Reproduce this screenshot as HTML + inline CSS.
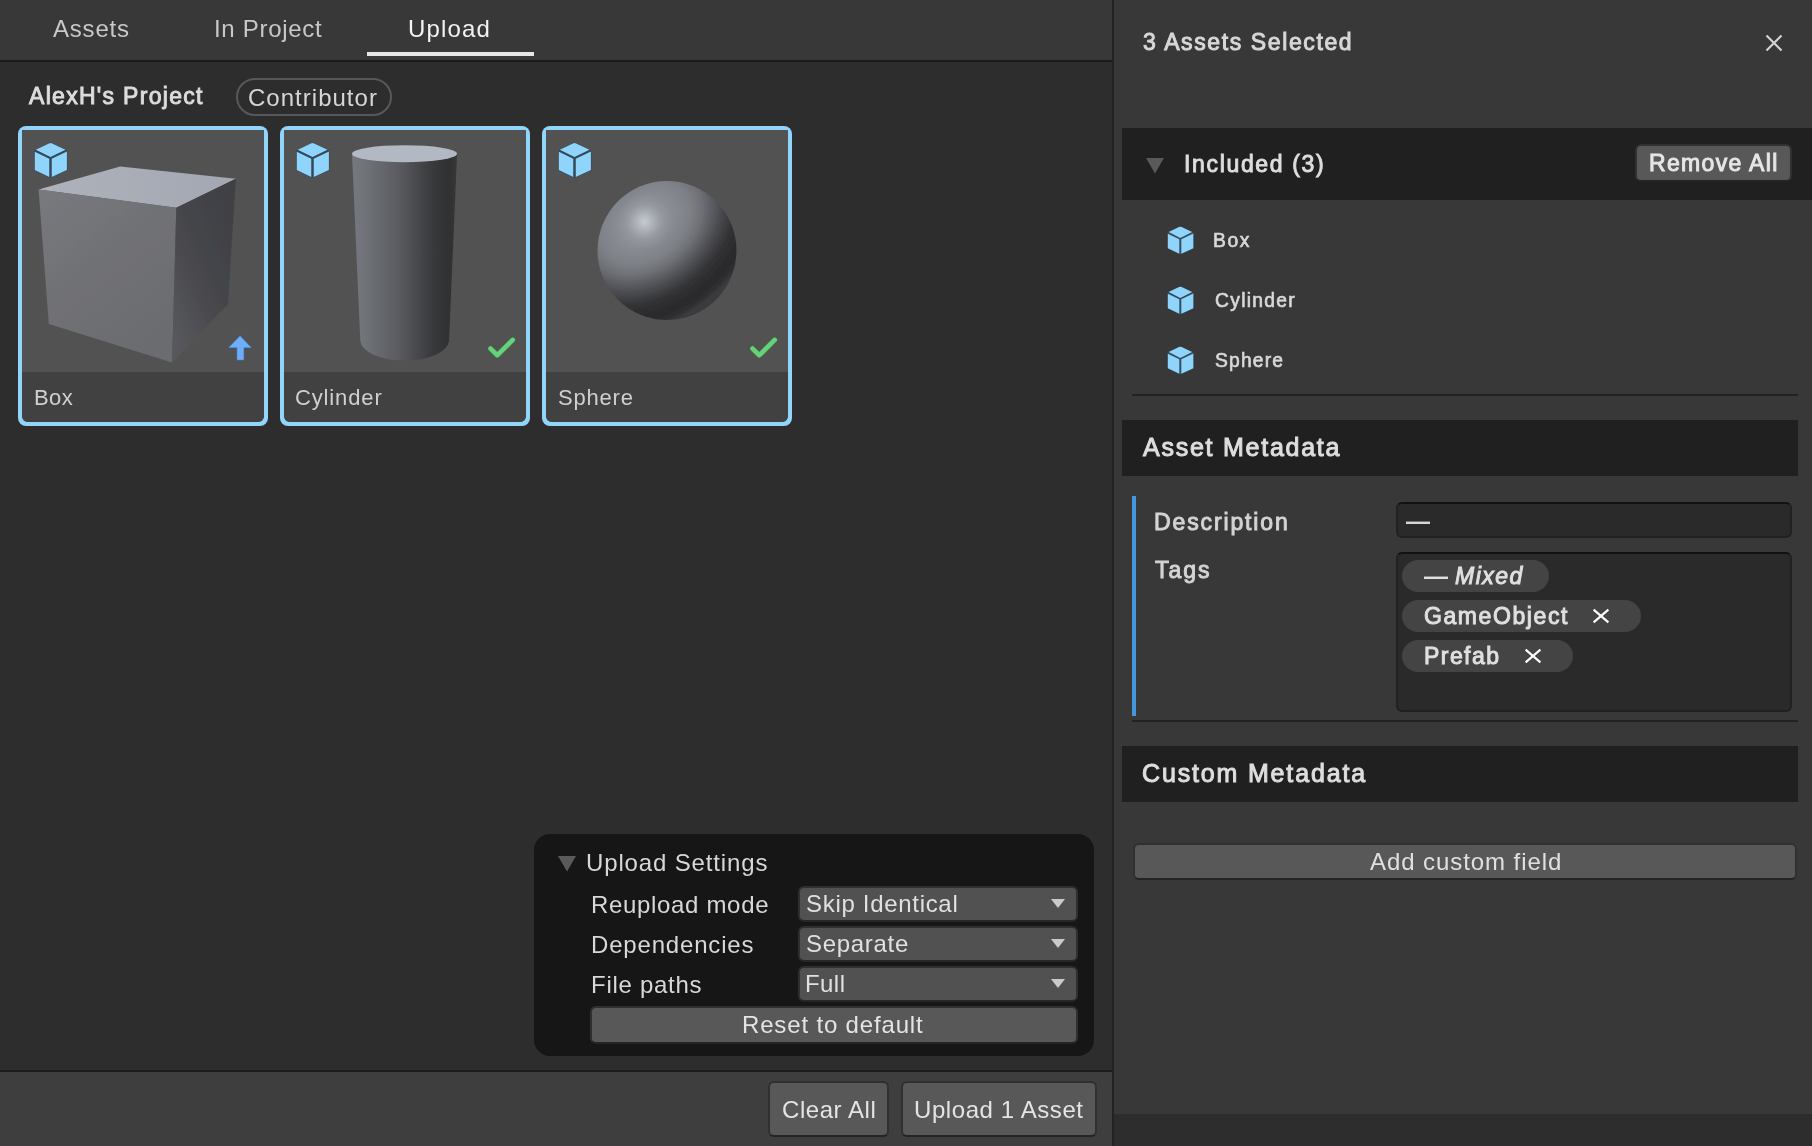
<!DOCTYPE html>
<html lang="en">
<head>
<meta charset="utf-8">
<title>Asset Manager - Upload</title>
<style>
html,body{margin:0;padding:0;}
body{width:1812px;height:1146px;overflow:hidden;background:#383838;position:relative;
 font-family:"Liberation Sans",sans-serif;font-size:24px;color:#d2d2d2;}
.abs{position:absolute;}
.t{position:absolute;white-space:nowrap;line-height:28px;height:28px;will-change:transform;}
.b{font-weight:bold;}
#left{position:absolute;left:0;top:0;width:1112px;height:1146px;background:#2d2d2d;overflow:hidden;}
#tabs{position:absolute;left:0;top:0;width:1112px;height:60px;background:#383838;border-bottom:2px solid #1b1b1b;}
#underline{position:absolute;left:367px;top:52px;width:167px;height:4px;background:#e6e6e6;}
#pill{position:absolute;left:236px;top:78px;width:152px;height:34px;border:2px solid #585858;border-radius:19px;}
.card{position:absolute;top:126px;width:250px;height:300px;border-radius:8px;background:#92d5fa;}
.card .in{position:absolute;left:4px;top:4px;width:242px;height:292px;background:#525252;overflow:hidden;border-radius:0 0 6px 6px;}
.card .lbl{position:absolute;left:0;top:242px;width:242px;height:50px;background:#414141;}
.card svg{position:absolute;left:0;top:0;}
#settings{position:absolute;left:534px;top:834px;width:560px;height:222px;border-radius:16px;background:#161616;}
.dd{position:absolute;left:798px;width:276px;height:32px;border:2px solid #2f2f2f;border-bottom-color:#262626;border-radius:6px;background:#515151;}
.dd i{position:absolute;right:11px;top:11px;width:0;height:0;border-left:7px solid transparent;border-right:7px solid transparent;border-top:9px solid #cacaca;}
.btn{position:absolute;border:2px solid #303030;border-bottom-color:#242424;border-radius:6px;background:#585858;}
#footer{position:absolute;left:0;top:1070px;width:1112px;height:76px;background:#3e3e3e;border-top:2px solid #1c1c1c;}
#divider{position:absolute;left:1112px;top:0;width:2px;height:1146px;background:#222;}
#right{position:absolute;left:1114px;top:0;width:698px;height:1146px;background:#383838;}
.hdr{position:absolute;background:#202020;}
.line{position:absolute;height:2px;background:#222;}
.inp{position:absolute;border:2px solid #212121;border-top-color:#111;border-radius:6px;background:#2a2a2a;}
.chip{position:absolute;height:32px;border-radius:16px;background:#444;}
</style>
</head>
<body>
<svg width="0" height="0" style="position:absolute"><defs><filter id="isoft" x="-10%" y="-10%" width="120%" height="120%"><feGaussianBlur stdDeviation="0.35"/></filter></defs></svg>
<div id="left">
  <div id="tabs"></div>
  <div class="t" style="left:53px;top:15px;color:#c8c8c8;letter-spacing:0.8px;">Assets</div>
  <div class="t" style="left:214px;top:15px;color:#c8c8c8;letter-spacing:0.7px;">In Project</div>
  <div class="t" style="left:408px;top:15px;color:#f2f2f2;letter-spacing:1.14px;">Upload</div>
  <div id="underline"></div>
  <div class="t" style="left:29px;top:82px;color:#dcdcdc;font-size:23px;letter-spacing:1.3px;-webkit-text-stroke:0.95px #dcdcdc;">AlexH's Project</div>
  <div id="pill"></div>
  <div class="t" style="left:248px;top:84px;color:#d6d6d6;letter-spacing:1.02px;">Contributor</div>

  <div class="card" style="left:18px;"><div class="in">
    <svg width="242" height="242" viewBox="4 4 242 242">
      <defs>
        <filter id="soft" x="-5%" y="-5%" width="110%" height="110%"><feGaussianBlur stdDeviation="0.55"/></filter>
        <linearGradient id="bt" x1="0" y1="0" x2="1" y2="0"><stop offset="0" stop-color="#adb2bb"/><stop offset="1" stop-color="#a2a7b1"/></linearGradient>
        <linearGradient id="bf" x1="0" y1="0" x2="0.6" y2="1"><stop offset="0" stop-color="#787a7e"/><stop offset="0.5" stop-color="#707175"/><stop offset="1" stop-color="#6b6c6f"/></linearGradient>
        <linearGradient id="br" x1="1" y1="0" x2="0.2" y2="1"><stop offset="0" stop-color="#3e3f43"/><stop offset="0.5" stop-color="#444549"/><stop offset="1" stop-color="#57585c"/></linearGradient>
      </defs>
      <g filter="url(#soft)">
      <path d="M20.6 63.6 L102.2 40.6 L217.8 52.7 L158.3 81.8 Z" fill="url(#bt)"/>
      <path d="M20.6 63.6 L158.3 81.8 L154.1 236.4 L30.8 198 Z" fill="url(#bf)"/>
      <path d="M158.3 81.8 L217.8 52.7 L210 178 L154.1 236.4 Z" fill="url(#br)"/>
      </g>
    </svg>
    <div class="lbl"></div>
  </div></div>
  <div class="card" style="left:280px;"><div class="in">
    <svg width="242" height="242" viewBox="4 4 242 242">
      <defs>
        <linearGradient id="cy" x1="0" y1="0" x2="1" y2="0"><stop offset="0" stop-color="#75787e"/><stop offset="0.12" stop-color="#707379"/><stop offset="0.45" stop-color="#5a5b5f"/><stop offset="0.75" stop-color="#3a3b3e"/><stop offset="0.93" stop-color="#2f3032"/><stop offset="1" stop-color="#38393b"/></linearGradient>
      </defs>
      <g filter="url(#soft)"><path d="M72 27.7 L80.3 214.9 A44.4 20.7 0 0 0 169 214.9 L177.1 27.7 Z" fill="url(#cy)"/>
      <ellipse cx="124.5" cy="27.7" rx="52.5" ry="8.5" fill="#b3b9c3"/></g>
    </svg>
    <div class="lbl"></div>
  </div></div>
  <div class="card" style="left:542px;"><div class="in">
    <svg width="242" height="242" viewBox="4 4 242 242">
      <defs>
        <radialGradient id="sp" cx="102.4" cy="95.8" r="100" gradientUnits="userSpaceOnUse" gradientTransform="translate(102.4 95.8) rotate(-37) scale(1.3 1) rotate(37) translate(-102.4 -95.8)"><stop offset="0" stop-color="#979ba2"/><stop offset="0.22" stop-color="#8a8d93"/><stop offset="0.38" stop-color="#7d8086"/><stop offset="0.48" stop-color="#6e7075"/><stop offset="0.55" stop-color="#5d5f64"/><stop offset="0.64" stop-color="#4a4b4f"/><stop offset="0.71" stop-color="#3b3c3f"/><stop offset="0.77" stop-color="#313134"/><stop offset="0.83" stop-color="#2d2d2f"/><stop offset="0.9" stop-color="#2b2b2d"/><stop offset="0.96" stop-color="#2e2e30"/><stop offset="1" stop-color="#3a3b3e"/></radialGradient>
        <radialGradient id="sh" cx="102.4" cy="95.8" r="28" gradientUnits="userSpaceOnUse"><stop offset="0" stop-color="#c9cdd4" stop-opacity="0.95"/><stop offset="0.3" stop-color="#c0c4cb" stop-opacity="0.6"/><stop offset="0.65" stop-color="#b0b4bb" stop-opacity="0.2"/><stop offset="1" stop-color="#a0a4ab" stop-opacity="0"/></radialGradient>
      </defs>
      <g filter="url(#soft)"><circle cx="125" cy="124.5" r="69.5" fill="url(#sp)"/><circle cx="125" cy="124.5" r="69.5" fill="url(#sh)"/></g>
    </svg>
    <div class="lbl"></div>
  </div></div>
  <svg class="abs" style="left:34px;top:141.9px;" width="34" height="36.4" viewBox="0 0 34 36.4"><g filter="url(#isoft)"><path d="M16.5 0.3 L33.4 8.4 V28.2 L16.5 36.2 L0.3 28.2 V8.4 Z" fill="#34485a"/><path d="M14.9 1.4 Q16.5 0.6 18.1 1.4 L31.5 7.65 L16.5 15.0 L1.8 7.65 Z M0.8 9.7 L15.25 16.75 V35.1 L0.8 27.9 Z M17.75 16.75 L32.9 9.5 V27.9 L17.75 35.1 Z" fill="#8fd4fb"/></g></svg>
  <svg class="abs" style="left:296px;top:141.9px;" width="34" height="36.4" viewBox="0 0 34 36.4"><g filter="url(#isoft)"><path d="M16.5 0.3 L33.4 8.4 V28.2 L16.5 36.2 L0.3 28.2 V8.4 Z" fill="#34485a"/><path d="M14.9 1.4 Q16.5 0.6 18.1 1.4 L31.5 7.65 L16.5 15.0 L1.8 7.65 Z M0.8 9.7 L15.25 16.75 V35.1 L0.8 27.9 Z M17.75 16.75 L32.9 9.5 V27.9 L17.75 35.1 Z" fill="#8fd4fb"/></g></svg>
  <svg class="abs" style="left:558px;top:141.9px;" width="34" height="36.4" viewBox="0 0 34 36.4"><g filter="url(#isoft)"><path d="M16.5 0.3 L33.4 8.4 V28.2 L16.5 36.2 L0.3 28.2 V8.4 Z" fill="#34485a"/><path d="M14.9 1.4 Q16.5 0.6 18.1 1.4 L31.5 7.65 L16.5 15.0 L1.8 7.65 Z M0.8 9.7 L15.25 16.75 V35.1 L0.8 27.9 Z M17.75 16.75 L32.9 9.5 V27.9 L17.75 35.1 Z" fill="#8fd4fb"/></g></svg>
  <svg class="abs" style="left:226px;top:334px;" width="28" height="28" viewBox="0 0 28 28"><path d="M14.07 1.5 L25.9 13.9 H18.1 V26.3 H10.75 V13.9 H2 Z" fill="#6eaef7" stroke="#3a5a8c" stroke-width="0.7" stroke-linejoin="round"/></svg>
  <svg class="abs" style="left:486px;top:334px;" width="30" height="26" viewBox="0 0 30 26"><path d="M4.55 14.6 L11.36 21.2 L26.7 5.9" stroke="#356f43" stroke-width="5.8" stroke-linecap="round" stroke-linejoin="round" fill="none" opacity="0.7"/><path d="M4.55 14.6 L11.36 21.2 L26.7 5.9" stroke="#66d07a" stroke-width="4.7" stroke-linecap="round" stroke-linejoin="round" fill="none"/></svg>
  <svg class="abs" style="left:748px;top:334px;" width="30" height="26" viewBox="0 0 30 26"><path d="M4.55 14.6 L11.36 21.2 L26.7 5.9" stroke="#356f43" stroke-width="5.8" stroke-linecap="round" stroke-linejoin="round" fill="none" opacity="0.7"/><path d="M4.55 14.6 L11.36 21.2 L26.7 5.9" stroke="#66d07a" stroke-width="4.7" stroke-linecap="round" stroke-linejoin="round" fill="none"/></svg>
  <div class="t" style="left:34px;top:384px;color:#d0d0d0;font-size:22px;letter-spacing:0.45px;">Box</div>
  <div class="t" style="left:295px;top:384px;color:#d0d0d0;font-size:22px;letter-spacing:0.86px;">Cylinder</div>
  <div class="t" style="left:558px;top:384px;color:#d0d0d0;font-size:22px;letter-spacing:0.8px;">Sphere</div>

  <div id="settings"></div>
  <svg class="abs" style="left:558px;top:856px;" width="18" height="16" viewBox="0 0 18 16"><path d="M0 0 H18 L9 15.5 Z" fill="#5a5a5a"/></svg>
  <div class="t" style="left:586px;top:849px;color:#d8d8d8;letter-spacing:0.86px;">Upload Settings</div>
  <div class="t" style="left:591px;top:891px;color:#d8d8d8;letter-spacing:0.67px;">Reupload mode</div>
  <div class="t" style="left:591px;top:931px;color:#d8d8d8;letter-spacing:0.82px;">Dependencies</div>
  <div class="t" style="left:591px;top:971px;color:#d8d8d8;letter-spacing:0.72px;">File paths</div>
  <div class="dd" style="top:886px;"><i></i></div>
  <div class="dd" style="top:926px;"><i></i></div>
  <div class="dd" style="top:966px;"><i></i></div>
  <div class="t" style="left:806px;top:890px;color:#e0e0e0;letter-spacing:0.69px;">Skip Identical</div>
  <div class="t" style="left:806px;top:930px;color:#e0e0e0;letter-spacing:0.69px;">Separate</div>
  <div class="t" style="left:805px;top:970px;color:#e0e0e0;letter-spacing:0.43px;">Full</div>
  <div class="btn" style="left:590px;top:1006px;width:484px;height:34px;"></div>
  <div class="t" style="left:742px;top:1011px;color:#e4e4e4;letter-spacing:0.84px;">Reset to default</div>

  <div id="footer"></div>
  <div class="btn" style="left:768px;top:1081px;width:117px;height:52px;"></div>
  <div class="t" style="left:782px;top:1096px;color:#e4e4e4;letter-spacing:0.55px;">Clear All</div>
  <div class="btn" style="left:901px;top:1081px;width:192px;height:52px;"></div>
  <div class="t" style="left:914px;top:1096px;color:#e4e4e4;letter-spacing:0.58px;">Upload 1 Asset</div>
</div>
<div id="divider"></div>
<div id="right">
  <div class="t" style="left:29px;top:28px;color:#d8d8d8;font-size:23px;letter-spacing:1.61px;-webkit-text-stroke:0.95px #d8d8d8;">3 Assets Selected</div>
  <svg class="abs" style="left:651px;top:34px;" width="18" height="18" viewBox="0 0 18 18"><path d="M1.5 1.5 L16.5 16.5 M16.5 1.5 L1.5 16.5" stroke="#d2d2d2" stroke-width="2.2" fill="none"/></svg>

  <div class="hdr" style="left:8px;top:128px;width:690px;height:72px;"></div>
  <svg class="abs" style="left:32px;top:158px;" width="18" height="16" viewBox="0 0 18 16"><path d="M0 0 H18 L9 15.5 Z" fill="#595959"/></svg>
  <div class="t" style="left:70px;top:150px;color:#dedede;font-size:23px;letter-spacing:1.66px;-webkit-text-stroke:0.95px #dedede;">Included (3)</div>
  <div class="btn" style="left:521px;top:144px;width:153px;height:34px;"></div>
  <div class="t" style="left:535px;top:149px;color:#e6e6e6;font-size:23px;letter-spacing:1.33px;-webkit-text-stroke:0.95px #e6e6e6;">Remove All</div>

  <svg class="abs" style="left:52.7px;top:225.5px;" width="27.4" height="28.9" viewBox="0 0 34 36.4"><g filter="url(#isoft)"><path d="M16.5 0.3 L33.4 8.4 V28.2 L16.5 36.2 L0.3 28.2 V8.4 Z" fill="#34485a"/><path d="M14.9 1.4 Q16.5 0.6 18.1 1.4 L31.5 7.65 L16.5 15.0 L1.8 7.65 Z M0.8 9.7 L15.25 16.75 V35.1 L0.8 27.9 Z M17.75 16.75 L32.9 9.5 V27.9 L17.75 35.1 Z" fill="#8fd4fb"/></g></svg>
  <svg class="abs" style="left:52.7px;top:285.5px;" width="27.4" height="28.9" viewBox="0 0 34 36.4"><g filter="url(#isoft)"><path d="M16.5 0.3 L33.4 8.4 V28.2 L16.5 36.2 L0.3 28.2 V8.4 Z" fill="#34485a"/><path d="M14.9 1.4 Q16.5 0.6 18.1 1.4 L31.5 7.65 L16.5 15.0 L1.8 7.65 Z M0.8 9.7 L15.25 16.75 V35.1 L0.8 27.9 Z M17.75 16.75 L32.9 9.5 V27.9 L17.75 35.1 Z" fill="#8fd4fb"/></g></svg>
  <svg class="abs" style="left:52.7px;top:345.5px;" width="27.4" height="28.9" viewBox="0 0 34 36.4"><g filter="url(#isoft)"><path d="M16.5 0.3 L33.4 8.4 V28.2 L16.5 36.2 L0.3 28.2 V8.4 Z" fill="#34485a"/><path d="M14.9 1.4 Q16.5 0.6 18.1 1.4 L31.5 7.65 L16.5 15.0 L1.8 7.65 Z M0.8 9.7 L15.25 16.75 V35.1 L0.8 27.9 Z M17.75 16.75 L32.9 9.5 V27.9 L17.75 35.1 Z" fill="#8fd4fb"/></g></svg>
  <div class="t" style="left:99px;top:227px;color:#d8d8d8;font-size:19.3px;letter-spacing:1.6px;-webkit-text-stroke:0.65px #d8d8d8;">Box</div>
  <div class="t" style="left:101px;top:287px;color:#d8d8d8;font-size:19.3px;letter-spacing:1.29px;-webkit-text-stroke:0.65px #d8d8d8;">Cylinder</div>
  <div class="t" style="left:101px;top:347px;color:#d8d8d8;font-size:19.3px;letter-spacing:1.16px;-webkit-text-stroke:0.65px #d8d8d8;">Sphere</div>

  <div class="line" style="left:18px;top:394px;width:666px;"></div>

  <div class="hdr" style="left:8px;top:420px;width:676px;height:56px;"></div>
  <div class="t" style="left:29px;top:433px;color:#dedede;font-size:25px;letter-spacing:1.75px;-webkit-text-stroke:1.0px #dedede;">Asset Metadata</div>

  <div class="abs" style="left:18px;top:496px;width:4px;height:220px;background:#4696de;"></div>
  <div class="t" style="left:40px;top:508px;color:#d4d4d4;font-size:23px;letter-spacing:1.87px;-webkit-text-stroke:0.95px #d4d4d4;">Description</div>
  <div class="inp" style="left:282px;top:502px;width:392px;height:32px;"></div>
  <div class="t b" style="left:292px;top:507px;color:#d6d6d6;">&mdash;</div>
  <div class="t" style="left:41px;top:556px;color:#d4d4d4;font-size:23px;letter-spacing:1.97px;-webkit-text-stroke:0.95px #d4d4d4;">Tags</div>
  <div class="inp" style="left:282px;top:552px;width:392px;height:156px;"></div>
  <div class="chip" style="left:288px;top:560px;width:147px;"></div>
  <div class="chip" style="left:288px;top:600px;width:239px;"></div>
  <div class="chip" style="left:288px;top:640px;width:171px;"></div>
  <div class="t b" style="left:310px;top:562px;color:#e0e0e0;">&mdash;</div>
  <div class="t" style="left:341px;top:562px;color:#e0e0e0;font-size:23px;letter-spacing:1.5px;-webkit-text-stroke:0.95px #e0e0e0;"><i>Mixed</i></div>
  <div class="t" style="left:310px;top:602px;color:#e0e0e0;font-size:23px;letter-spacing:1.59px;-webkit-text-stroke:0.95px #e0e0e0;">GameObject</div>
  <div class="t" style="left:310px;top:642px;color:#e0e0e0;font-size:23px;letter-spacing:1.44px;-webkit-text-stroke:0.95px #e0e0e0;">Prefab</div>
  <svg class="abs" style="left:478px;top:608px;" width="18" height="16" viewBox="0 0 18 16"><path d="M1.6 1.6 L16.4 14.4 M16.4 1.6 L1.6 14.4" stroke="#fafafa" stroke-width="2.2" fill="none"/></svg>
  <svg class="abs" style="left:410.3px;top:648px;" width="18" height="16" viewBox="0 0 18 16"><path d="M1.6 1.6 L16.4 14.4 M16.4 1.6 L1.6 14.4" stroke="#fafafa" stroke-width="2.2" fill="none"/></svg>

  <div class="line" style="left:18px;top:720px;width:666px;"></div>

  <div class="hdr" style="left:8px;top:746px;width:676px;height:56px;"></div>
  <div class="t" style="left:28px;top:759px;color:#dedede;font-size:25px;letter-spacing:1.84px;-webkit-text-stroke:1.0px #dedede;">Custom Metadata</div>

  <div class="btn" style="left:19px;top:843px;width:660px;height:33px;"></div>
  <div class="t" style="left:256px;top:848px;color:#e0e0e0;letter-spacing:0.93px;">Add custom field</div>

  <div class="abs" style="left:0;top:1114px;width:698px;height:32px;background:#2d2d2d;"></div>
</div>
</body>
</html>
